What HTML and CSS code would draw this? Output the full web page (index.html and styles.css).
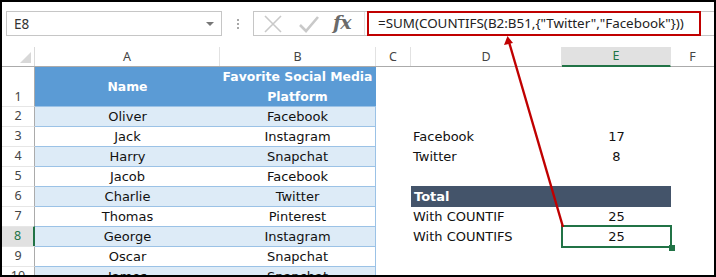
FILE: index.html
```html
<!DOCTYPE html>
<html lang="en">
<head>
<meta charset="UTF-8" />
<title>COUNTIFS with array</title>
<link rel="stylesheet" href="styles.css">
</head>
<body>

<div class="frame">
  <!-- formula bar -->
  <div class="formula-bar">
    <div class="name-box">
      <span>E8</span>
      <span class="caret"></span>
    </div>
    <div class="grip"><i></i><i></i><i></i></div>
    <div class="formula-box">
      <div class="fx-tools">
        <svg class="tool" width="20" height="20" viewBox="0 0 20 20"><path d="M2 2 L18 18 M18 2 L2 18" stroke="#c9c9c9" stroke-width="1.6" fill="none"/></svg>
        <svg class="tool" width="22" height="20" viewBox="0 0 22 20"><path d="M2 11 L8 17 L20 3" stroke="#c9c9c9" stroke-width="2.6" fill="none"/></svg>
        <span class="fx">fx</span>
      </div>
      <div class="formula-input">
        <div class="formula-text">=SUM(COUNTIFS(B2:B51,{"Twitter","Facebook"}))</div>
      </div>
    </div>
  </div>

  <!-- sheet -->
  <div class="sheet">
    <div class="row col-heads">
      <div class="corner"><span class="tri"></span></div>
      <div class="ch">A</div>
      <div class="ch">B</div>
      <div class="ch">C</div>
      <div class="ch">D</div>
      <div class="ch active">E</div>
      <div class="ch last">F</div>
    </div>

    <div class="row r-head">
      <div class="rh">1</div>
      <div class="tc th">Name</div>
      <div class="tc th b">Favorite Social Media Platform</div>
      <div></div><div></div><div></div><div></div>
    </div>

    <div class="row">
      <div class="rh">2</div>
      <div class="tc band">Oliver</div>
      <div class="tc band b">Facebook</div>
      <div></div><div></div><div></div><div></div>
    </div>
    <div class="row">
      <div class="rh">3</div>
      <div class="tc">Jack</div>
      <div class="tc b">Instagram</div>
      <div></div>
      <div class="lbl">Facebook</div>
      <div class="num">17</div>
      <div></div>
    </div>
    <div class="row">
      <div class="rh">4</div>
      <div class="tc band">Harry</div>
      <div class="tc band b">Snapchat</div>
      <div></div>
      <div class="lbl">Twitter</div>
      <div class="num">8</div>
      <div></div>
    </div>
    <div class="row">
      <div class="rh">5</div>
      <div class="tc">Jacob</div>
      <div class="tc b">Facebook</div>
      <div></div><div></div><div></div><div></div>
    </div>
    <div class="row">
      <div class="rh">6</div>
      <div class="tc band">Charlie</div>
      <div class="tc band b">Twitter</div>
      <div></div>
      <div class="total">Total</div>
      <div></div>
    </div>
    <div class="row">
      <div class="rh">7</div>
      <div class="tc">Thomas</div>
      <div class="tc b">Pinterest</div>
      <div></div>
      <div class="lbl">With COUNTIF</div>
      <div class="num">25</div>
      <div></div>
    </div>
    <div class="row">
      <div class="rh active">8</div>
      <div class="tc band">George</div>
      <div class="tc band b">Instagram</div>
      <div></div>
      <div class="lbl">With COUNTIFS</div>
      <div class="num selected">25<span class="handle"></span></div>
      <div></div>
    </div>
    <div class="row">
      <div class="rh">9</div>
      <div class="tc">Oscar</div>
      <div class="tc b">Snapchat</div>
      <div></div><div></div><div></div><div></div>
    </div>
    <div class="row">
      <div class="rh">10</div>
      <div class="tc band">James</div>
      <div class="tc band b">Snapchat</div>
      <div></div><div></div><div></div><div></div>
    </div>
  </div>

  <!-- callout arrow -->
  <svg class="arrow" width="716" height="277" viewBox="0 0 716 277">
    <line x1="563" y1="227" x2="509" y2="42" stroke="#c00000" stroke-width="2.4"/>
    <polygon points="507.5,36 504,45 513,43" fill="#c00000"/>
  </svg>
</div>

</body>
</html>
```

FILE: styles.css
```css
:root {
  --green: #217346;
  --head-text: #444;
  --blue: #5b9bd5;
  --band: #ddebf7;
  --band-line: #9bc2e6;
  --total: #44546a;
  --cols: 33px 185px 156px 35px 151px 109px 1fr;
}
* {
  box-sizing: border-box;
}
body {
  margin: 0;
  background: #fff;
}
.frame {
  position: relative;
  width: 716px;
  height: 277px;
  border: 2px solid #000;
  overflow: hidden;
  background: #fff;
}

/* formula bar */
.formula-bar {
  display: flex;
  align-items: flex-start;
  height: 45px;
  padding: 9px 0 0 4px;
  font-family: "Noto Sans", "Open Sans", sans-serif;
}
.name-box {
  width: 216px;
  height: 25px;
  border: 1px solid #c6c6c6;
  display: flex;
  align-items: center;
  justify-content: space-between;
  padding: 0 7px 0 7px;
  font-size: 13.5px;
  color: #333;
}
.caret {
  width: 0;
  height: 0;
  border-left: 4px solid transparent;
  border-right: 4px solid transparent;
  border-top: 4px solid #777;
  margin-top: 1px;
}
.grip {
  width: 31px;
  display: flex;
  flex-direction: column;
  align-items: center;
  gap: 2px;
  padding-top: 8px;
}
.grip i {
  display: block;
  width: 2px;
  height: 2px;
  background: #a8a8a8;
}
.formula-box {
  flex: 1;
  height: 25px;
  border: 1px solid #c6c6c6;
  border-right: none;
  display: flex;
}
.fx-tools {
  width: 110px;
  display: flex;
  align-items: center;
  padding-left: 9px;
  gap: 15px;
}
.fx {
  font-family: "DejaVu Serif", "Liberation Serif", serif;
  font-style: italic;
  font-weight: bold;
  font-size: 19px;
  color: #6a6a6a;
  margin-top: -3px;
  margin-left: -2px;
  letter-spacing: -1px;
}
.formula-input {
  flex: 1;
  border-left: 1px solid #e2e2e2;
  position: relative;
}
.formula-text {
  position: absolute;
  left: 2px;
  top: -1px;
  width: 334px;
  height: 25px;
  border: 2px solid #c00000;
  padding-left: 9px;
  line-height: 21px;
  font-size: 13.4px;
  color: #222;
  white-space: nowrap;
}

/* sheet grid */
.sheet {
  font-family: "DejaVu Sans", Verdana, sans-serif;
  font-size: 13px;
  color: #111;
}
.row {
  display: grid;
  grid-template-columns: var(--cols);
  height: 20px;
}
.row > div {
  min-width: 0;
}
.col-heads {
  height: 20px;
  border-bottom: 1px solid #ababab;
  font-family: "Noto Sans", "Open Sans", sans-serif;
  font-size: 12.5px;
  color: var(--head-text);
}
.corner {
  border-right: 1px solid #dadada;
  position: relative;
}
.tri {
  position: absolute;
  right: 3px;
  bottom: 3px;
  width: 0;
  height: 0;
  border-left: 11px solid transparent;
  border-bottom: 11px solid #d8d8d8;
}
.ch {
  text-align: center;
  line-height: 19px;
  border-right: 1px solid #e2e2e2;
}
.ch.last {
  border-right: none;
}
.ch.active {
  background: #e1e1e1;
  color: var(--green);
  border-bottom: 2px solid var(--green);
  margin-bottom: -1px;
  line-height: 18px;
}
.rh {
  border-right: 1px solid #ababab;
  border-top: 1px solid #e6e6e6;
  text-align: center;
  font-family: "Noto Sans", "Open Sans", sans-serif;
  font-size: 12.5px;
  color: var(--head-text);
  line-height: 18px;
}
.rh.active {
  background: #e1e1e1;
  color: var(--green);
  border-right: 2px solid var(--green);
}
.r-head {
  height: 39px;
}
.r-head .rh {
  border-top: none;
  display: flex;
  align-items: flex-end;
  justify-content: center;
  padding-bottom: 1px;
}
.tc {
  text-align: center;
  line-height: 20px;
  border-top: 1px solid var(--band-line);
  white-space: nowrap;
}
.tc.b {
  border-right: 1px solid var(--band-line);
}
.band {
  background: var(--band);
}
.th {
  background: var(--blue);
  color: #fff;
  font-weight: bold;
  font-size: 12.4px;
  border-top: none;
  white-space: normal;
  display: flex;
  align-items: center;
  justify-content: center;
  line-height: 20px;
  padding: 0 2px;
}
.th.b {
  border-right-color: var(--blue);
}
.lbl {
  padding: 1px 0 0 2px;
  line-height: 20px;
  white-space: nowrap;
}
.num {
  text-align: center;
  line-height: 20px;
  padding-top: 1px;
  position: relative;
}
.total {
  grid-column: span 2;
  background: var(--total);
  color: #fff;
  font-weight: bold;
  padding-left: 3px;
  line-height: 21px;
  height: 21px;
}
.selected::after {
  content: "";
  position: absolute;
  left: -1px;
  top: -1px;
  right: -1px;
  bottom: -1px;
  border: 2px solid var(--green);
}
.handle {
  position: absolute;
  right: -4px;
  bottom: -4px;
  width: 6px;
  height: 6px;
  background: var(--green);
  z-index: 1;
}

.arrow {
  position: absolute;
  left: -2px;
  top: -2px;
  pointer-events: none;
}
```
